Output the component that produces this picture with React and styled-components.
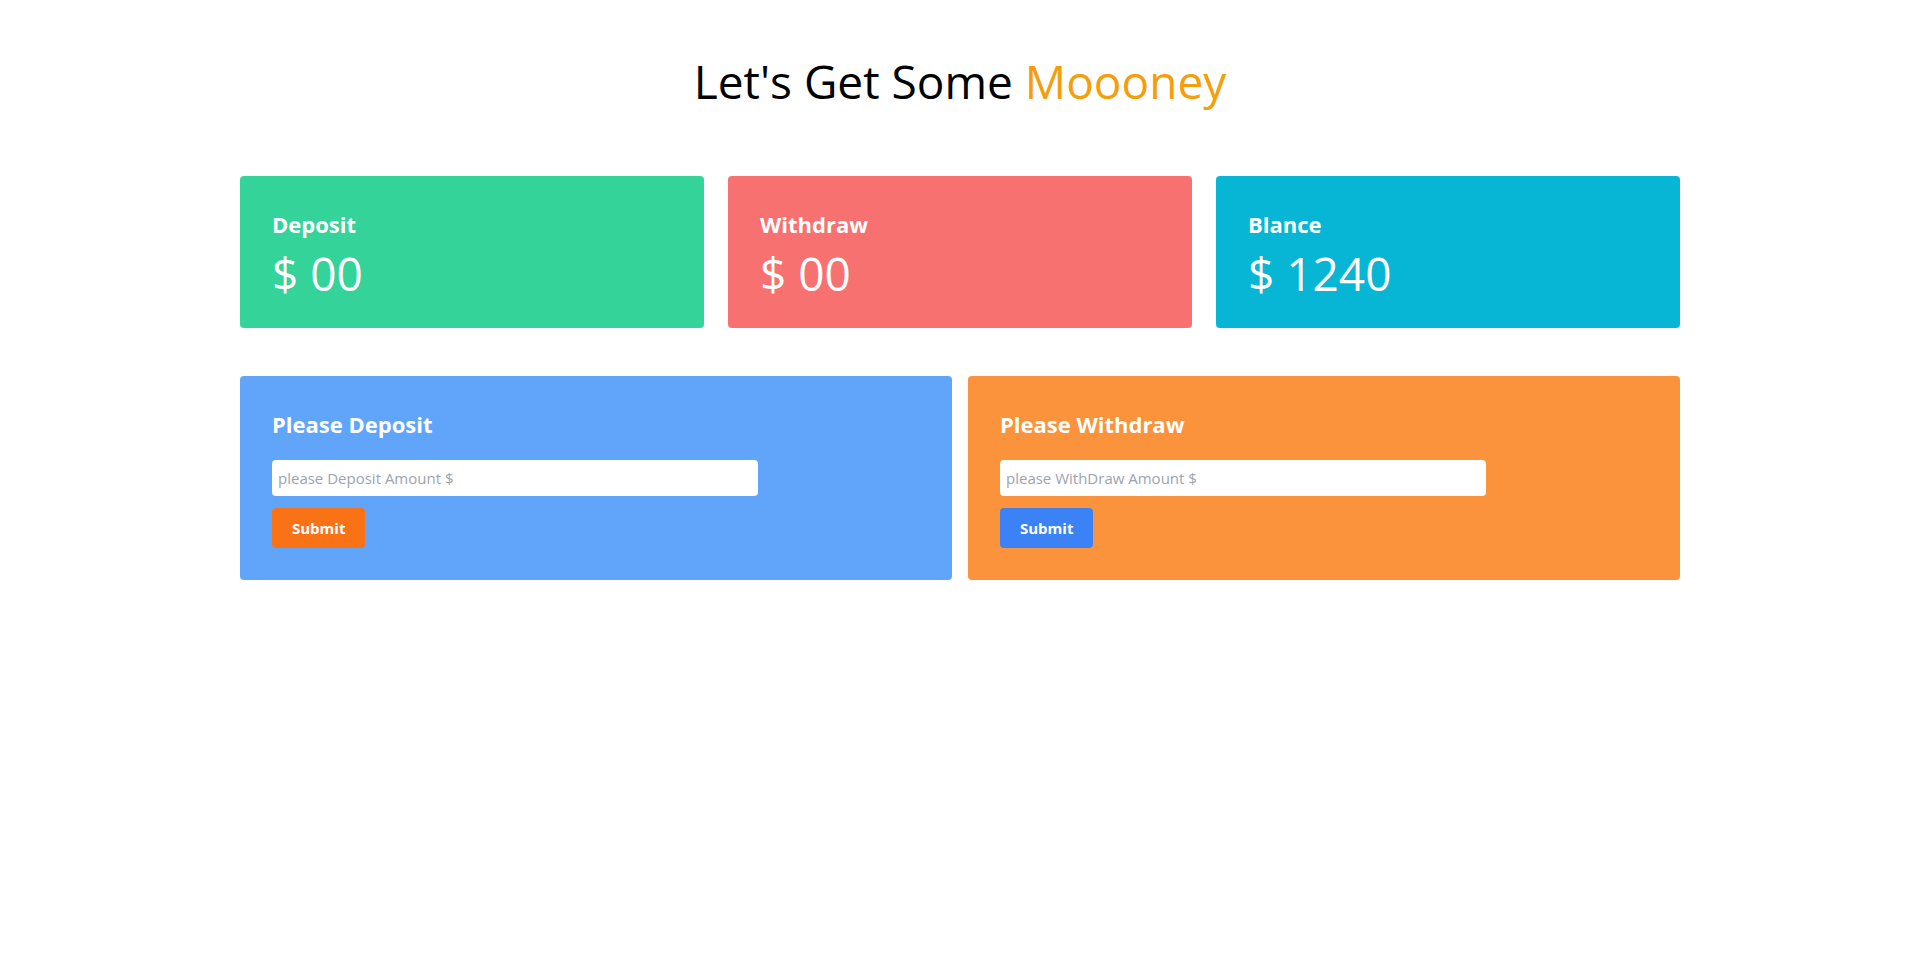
import React, { useState } from "react";
import styled, { createGlobalStyle } from "styled-components";

const GlobalStyle = createGlobalStyle`
  * {
    box-sizing: border-box;
  }

  body {
    margin: 0;
    background: #fff;
    font-family: 'Open Sans', 'Noto Sans', sans-serif;
  }
`;

const Page = styled.main`
  width: 75%;
  margin: 0 auto;
  padding-top: 57px;
`;

const Title = styled.h1`
  margin: 0 0 71px;
  text-align: center;
  font-size: 46px;
  line-height: 48px;
  font-weight: 400;
  color: #000;

  span {
    color: #f59e0b;
  }
`;

const Stats = styled.section`
  display: grid;
  grid-template-columns: repeat(3, 1fr);
  gap: 24px;
`;

const StatCard = styled.div`
  height: 152px;
  padding: 32px;
  border-radius: 4px;
  background: ${(p) => p.$bg};
  color: #fff;
`;

const StatLabel = styled.h4`
  margin: 0;
  font-size: 22px;
  line-height: 32px;
  font-weight: 700;
`;

const StatValue = styled.p`
  margin: 10px 0 0;
  font-size: 46px;
  line-height: 1;
  font-weight: 400;
`;

const Forms = styled.section`
  display: grid;
  grid-template-columns: repeat(2, 1fr);
  gap: 16px;
  margin-top: 48px;
`;

const Panel = styled.form`
  padding: 32px;
  border-radius: 4px;
  background: ${(p) => p.$bg};
`;

const PanelTitle = styled.h4`
  margin: 0 0 20px;
  font-size: 22px;
  line-height: 32px;
  font-weight: 700;
  color: #fff;
`;

const AmountInput = styled.input`
  display: block;
  width: 75%;
  height: 36px;
  padding: 0 6px;
  border: none;
  border-radius: 4px;
  font-family: inherit;
  font-size: 15px;
  color: #111;
  outline: none;

  &::placeholder {
    color: #9ca3af;
  }
`;

const SubmitButton = styled.button`
  display: block;
  height: 40px;
  margin-top: 12px;
  padding: 0 20px;
  border: none;
  border-radius: 4px;
  background: ${(p) => p.$bg};
  color: #fff;
  font-family: inherit;
  font-size: 15px;
  font-weight: 700;
  cursor: pointer;
`;

const App = () => {
  const [deposit, setDeposit] = useState(0);
  const [withdraw, setWithdraw] = useState(0);
  const [balance, setBalance] = useState(1240);
  const [depositInput, setDepositInput] = useState("");
  const [withdrawInput, setWithdrawInput] = useState("");

  const fmt = (n) => (n === 0 ? "00" : String(n));

  const handleDeposit = (e) => {
    e.preventDefault();
    const amount = parseFloat(depositInput);
    if (!amount) return;
    setDeposit(deposit + amount);
    setBalance(balance + amount);
    setDepositInput("");
  };

  const handleWithdraw = (e) => {
    e.preventDefault();
    const amount = parseFloat(withdrawInput);
    if (!amount) return;
    setWithdraw(withdraw + amount);
    setBalance(balance - amount);
    setWithdrawInput("");
  };

  return (
    <>
      <GlobalStyle />
      <Page>
        <Title>
          Let's Get Some <span>Moooney</span>
        </Title>

        <Stats>
          <StatCard $bg="#34d399">
            <StatLabel>Deposit</StatLabel>
            <StatValue>$ {fmt(deposit)}</StatValue>
          </StatCard>
          <StatCard $bg="#f87171">
            <StatLabel>Withdraw</StatLabel>
            <StatValue>$ {fmt(withdraw)}</StatValue>
          </StatCard>
          <StatCard $bg="#06b6d4">
            <StatLabel>Blance</StatLabel>
            <StatValue>$ {fmt(balance)}</StatValue>
          </StatCard>
        </Stats>

        <Forms>
          <Panel $bg="#60a5fa" onSubmit={handleDeposit}>
            <PanelTitle>Please Deposit</PanelTitle>
            <AmountInput
              type="number"
              placeholder="please Deposit Amount $"
              value={depositInput}
              onChange={(e) => setDepositInput(e.target.value)}
            />
            <SubmitButton $bg="#f97316" type="submit">Submit</SubmitButton>
          </Panel>
          <Panel $bg="#fb923c" onSubmit={handleWithdraw}>
            <PanelTitle>Please Withdraw</PanelTitle>
            <AmountInput
              type="number"
              placeholder="please WithDraw Amount $"
              value={withdrawInput}
              onChange={(e) => setWithdrawInput(e.target.value)}
            />
            <SubmitButton $bg="#3b82f6" type="submit">Submit</SubmitButton>
          </Panel>
        </Forms>
      </Page>
    </>
  );
};

export default App;
